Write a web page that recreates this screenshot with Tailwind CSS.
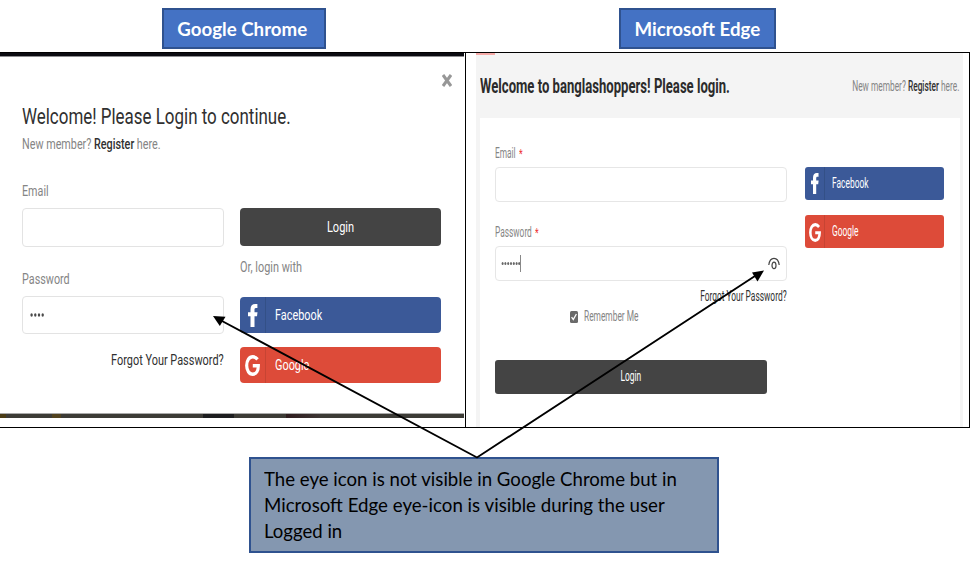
<!DOCTYPE html>
<html lang="en">
<head>
<meta charset="utf-8">
<title>Login comparison</title>
<script src="https://cdn.jsdelivr.net/npm/@tailwindcss/browser@4"></script>
</head>
<body class="bg-white">
<main class="relative w-[976px] h-[562px] overflow-hidden bg-white font-['Roboto',sans-serif] whitespace-nowrap">
  <!-- Browser captions -->
  <header class="flex h-[52px] pt-2 pl-[162px] font-['Lato',sans-serif] font-bold text-white text-[18.5px]">
    <div class="flex w-[164px] h-[41px] items-center justify-center border-2 border-[#2f528f] bg-[#4472c4] pt-[3px]"><span class="inline-block -ml-[4px] scale-x-[1.01]">Google Chrome</span></div>
    <div class="ml-[293px] flex w-[157px] h-[41px] items-center justify-center border-2 border-[#2f528f] bg-[#4472c4] pt-[3px]"><span class="inline-block -ml-[1px] scale-x-[1.01]">Microsoft Edge</span></div>
  </header>

  <div class="flex w-[970px] h-[376px] border-y border-r border-black">
    <!-- Chrome -->
    <section class="w-[466px] h-[374px] border-r border-black text-[15px] text-[#858585]">
      <div class="w-[464px] h-[4px] bg-[#0b0c12] border-b border-[#8f8f92]"></div>
      <div class="h-[47px] flex justify-end pt-[17px] pr-[13px]">
        <svg class="w-[10px] h-[13px]" viewBox="0 0 10 13" fill="none" stroke="#979797" stroke-width="3" preserveAspectRatio="none"><path d="M1 1L9 12M9 1L1 12"/></svg>
      </div>
      <h1 class="pl-[22px] h-[26px] leading-[25px] text-[22px] text-[#303030]"><span class="inline-block origin-left scale-x-[0.77]">Welcome! Please Login to continue.</span></h1>
      <p class="pl-[22px] mt-[4px] h-[21px] leading-[21px]"><span class="inline-block origin-left scale-x-[0.719]">New member? <b class="font-medium text-[#303030]">Register</b> here.</span></p>
      <div class="flex pl-[22px] pt-[25px]">
        <form class="w-[202px]">
          <label class="block h-[28px] leading-[22px]"><span class="inline-block origin-left scale-x-[0.717]">Email</span></label>
          <div class="h-[39px] rounded-[4px] border border-[#e3e3e3]"></div>
          <label class="block mt-[21px] h-[28px] leading-[22px]"><span class="inline-block origin-left scale-x-[0.72]">Password</span></label>
          <div class="h-[38px] rounded-[4px] border border-[#e3e3e3] flex items-center pl-[7px]">
            <svg class="w-[15px] h-[4px]" viewBox="0 0 15 4" fill="#4a4a4a"><ellipse cx="1.6" cy="2" rx="1.2" ry="1.7"/><ellipse cx="5.3" cy="2" rx="1.2" ry="1.7"/><ellipse cx="9" cy="2" rx="1.2" ry="1.7"/><ellipse cx="12.700" cy="2" rx="1.2" ry="1.7"/></svg>
          </div>
          <p class="mt-[15px] h-[22px] leading-[22px] flex justify-end text-[#303030]"><span class="inline-block origin-right scale-x-[0.728]">Forgot Your Password?</span></p>
        </form>
        <div class="ml-[16px] mt-[28px] w-[201px] text-white">
          <div class="h-[38px] rounded-[4px] bg-[#444] flex items-center justify-center"><span class="inline-block scale-x-[0.735]">Login</span></div>
          <p class="mt-[10px] h-[22px] leading-[22px] text-[#858585]"><span class="inline-block origin-left scale-x-[0.725]">Or, login with</span></p>
          <div class="mt-[19px] h-[36px] rounded-[4px] bg-[#3b5998] flex items-center">
            <div class="w-[26px] h-full border-r border-[#335087] flex items-center justify-center"><svg class="w-[10px] h-[23px]" viewBox="0 0 10 23" preserveAspectRatio="none" fill="#fff"><path d="M2.5 23V12.200H0V8.200H2.500V5.400C2.500 1.800 4.300 0 7.300 0H9.400V4H7.900C6.800 4 6.500 4.700 6.500 5.800V8.200H9.500L9 12.200H6.500V23Z"/></svg></div>
            <span class="inline-block ml-[9px] origin-left scale-x-[0.726]">Facebook</span>
          </div>
          <div class="mt-[14px] h-[36px] rounded-[4px] bg-[#dd4b39] flex items-center">
            <div class="w-[26px] h-full border-r border-[#c74433] flex items-center justify-center"><svg class="w-[15px] h-[21px]" viewBox="0 0 16 21" preserveAspectRatio="none" fill="none" stroke="#fff" stroke-width="3.400"><path d="M13.400 4.400C12 2.700 10.400 1.800 8.400 1.800C4.400 1.800 1.800 5.600 1.800 10.500S4.400 19.200 8.300 19.200C12 19.200 14.200 15.800 14.200 10.800H8.300"/></svg></div>
            <span class="inline-block ml-[9px] origin-left scale-x-[0.726]">Google</span>
          </div>
        </div>
      </div>
      <div class="mt-[30px] w-[464px] h-[5px] border-t border-[#aaa] bg-[#3c3b36] flex">
        <div class="w-[6px] bg-[#4a3c16]"></div>
        <div class="ml-[46px] w-[9px] bg-[#51421f]"></div>
        <div class="ml-[142px] w-[31px] bg-[#1c1d1f]"></div>
        <div class="ml-[52px] w-[34px] bg-linear-to-r from-[#2e1c1e] to-[#3c3533]"></div>
      </div>
    </section>

    <!-- Edge -->
    <section class="ml-[10px] w-[487px] h-[374px] bg-[#f4f4f4] text-[14.5px] text-[#858585]">
      <div class="w-[19px] h-[2px] bg-[#f6aaa7]"></div>
      <div class="flex h-[63px] items-center justify-between pl-[4px] pr-[4px]">
        <h2 class="w-[250px] text-[20.5px] font-bold text-[#2b2b2b]"><span class="inline-block origin-left scale-x-[0.639]">Welcome to banglashoppers! Please login.</span></h2>
        <p class="w-[107px] flex justify-end"><span class="inline-block origin-right scale-x-[0.575]">New member? <b class="font-medium text-[#303030]">Register</b> here.</span></p>
      </div>
      <div class="ml-[4px] w-[480px] h-[309px] bg-white flex pl-[15px]">
        <form class="w-[292px] pt-[25px]">
          <label class="flex h-[24px] leading-[22px]"><span class="inline-block w-[24px]"><span class="inline-block origin-left scale-x-[0.575]">Email</span></span><span class="inline-block origin-left scale-x-[0.7] text-[12px] text-[#e33]">*</span></label>
          <div class="h-[35px] rounded-[4px] border border-[#e6e6e6]"></div>
          <label class="mt-[20px] flex h-[24px] leading-[22px]"><span class="inline-block w-[40px]"><span class="inline-block origin-left scale-x-[0.575]">Password</span></span><span class="inline-block origin-left scale-x-[0.7] text-[12px] text-[#e33]">*</span></label>
          <div class="h-[35px] rounded-[4px] border border-[#e6e6e6] flex items-center pl-[5px] pr-[6px]">
            <svg class="w-[21px] h-[17px]" viewBox="0 0 21 17"><g fill="#666"><ellipse cx="1.6" cy="8.500" rx="1" ry="1.500"/><ellipse cx="4.400" cy="8.500" rx="1" ry="1.500"/><ellipse cx="7.200" cy="8.500" rx="1" ry="1.500"/><ellipse cx="10" cy="8.500" rx="1" ry="1.500"/><ellipse cx="12.800" cy="8.500" rx="1" ry="1.500"/><ellipse cx="15.600" cy="8.500" rx="1" ry="1.500"/><ellipse cx="18.200" cy="8.500" rx="1" ry="1.500"/></g><path d="M19 0H20V17H19Z" fill="#888"/></svg>
            <svg class="ml-auto w-[12px] h-[13px]" viewBox="0 0 12 13" fill="none" stroke="#444" stroke-width="1.2"><path d="M0.800 8C1.300 3.800 3.300 1.400 6 1.400S10.700 3.800 11.200 8"/><ellipse cx="6" cy="8.400" rx="2" ry="3.200"/></svg>
          </div>
          <p class="mt-[4px] h-[22px] leading-[23px] flex justify-end text-[#303030]"><span class="inline-block origin-right scale-x-[0.578]">Forgot Your Password?</span></p>
          <div class="flex items-center h-[20px] pl-[75px]">
            <svg class="w-[8px] h-[12px]" viewBox="0 0 8 12" preserveAspectRatio="none"><rect width="8" height="12" rx="1.500" fill="#6a6a6a"/><path d="M1.600 6.200L3.300 8.600L6.400 3" fill="none" stroke="#fff" stroke-width="1.300"/></svg>
            <span class="inline-block ml-[6px] origin-left scale-x-[0.577]">Remember Me</span>
          </div>
          <div class="mt-[33px] w-[272px] h-[34px] rounded-[3px] bg-[#444] flex items-center justify-center text-white"><span class="inline-block scale-x-[0.58]">Login</span></div>
        </form>
        <div class="ml-[18px] pt-[49px] w-[139px] text-white">
          <div class="h-[33px] rounded-[3px] bg-[#3b5998] flex items-center">
            <div class="w-[20px] h-full border-r border-[#335087] flex items-center justify-center"><svg class="w-[8px] h-[21px]" viewBox="0 0 10 23" preserveAspectRatio="none" fill="#fff"><path d="M2.500 23V12.200H0V8.200H2.500V5.400C2.500 1.800 4.300 0 7.300 0H9.400V4H7.900C6.800 4 6.500 4.700 6.500 5.800V8.200H9.500L9 12.200H6.500V23Z"/></svg></div>
            <span class="inline-block ml-[7px] origin-left scale-x-[0.58]">Facebook</span>
          </div>
          <div class="mt-[15px] h-[33px] rounded-[3px] bg-[#dd4b39] flex items-center">
            <div class="w-[20px] h-full border-r border-[#c74433] flex items-center justify-center pt-[1px]"><svg class="w-[12px] h-[19px]" viewBox="0 0 16 21" preserveAspectRatio="none" fill="none" stroke="#fff" stroke-width="3.400"><path d="M13.400 4.400C12 2.700 10.400 1.800 8.400 1.800C4.400 1.800 1.800 5.600 1.800 10.500S4.400 19.200 8.300 19.200C12 19.200 14.200 15.800 14.200 10.800H8.300"/></svg></div>
            <span class="inline-block ml-[7px] pt-[1px] origin-left scale-x-[0.58]">Google</span>
          </div>
        </div>
      </div>
    </section>
  </div>

  <!-- Explanatory note -->
  <aside class="mt-[29px] ml-[249px] w-[470px] h-[96px] border-2 border-[#2f528f] bg-[#8497b0] pl-[13px] pt-[7px] font-['Lato',sans-serif] text-[18.5px] leading-[26px] text-black">
    <div><span class="inline-block origin-left scale-x-[1.006]">The eye icon is not visible in Google Chrome but in</span></div>
    <div><span class="inline-block origin-left scale-x-[1.01]">Microsoft Edge eye-icon is visible during the user</span></div>
    <div><span class="inline-block origin-left scale-x-[1.003]">Logged in</span></div>
  </aside>

  <!-- Arrows from the note to both password fields -->
  <svg class="absolute inset-0 w-[976px] h-[562px]" viewBox="0 0 976 562" fill="none" stroke="#000" stroke-width="1.900">
    <path d="M222 321L477 457.500L755 276"/>
    <path d="M213 316L225.500 316.700L219.800 326Z" fill="#000" stroke="none"/>
    <path d="M764 270.500L757.500 281.500L752 272.500Z" fill="#000" stroke="none"/>
  </svg>
</main>
</body>
</html>
